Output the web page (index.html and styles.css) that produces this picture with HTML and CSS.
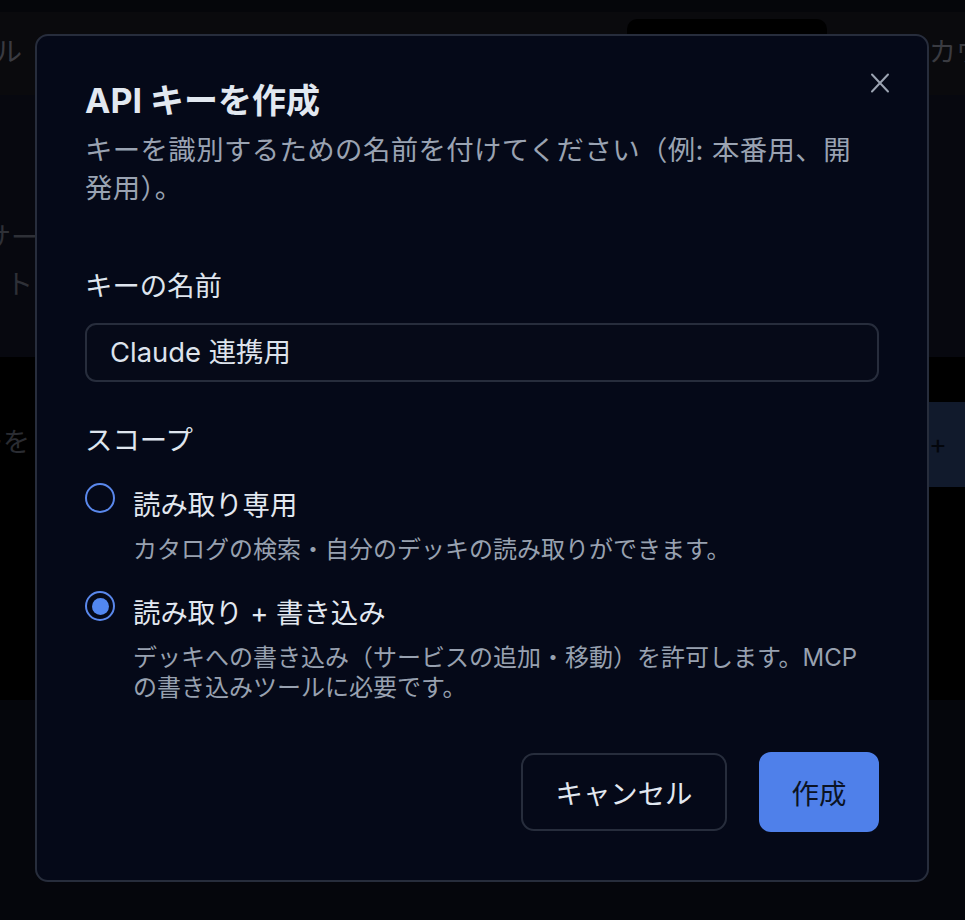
FILE: index.html
```html
<!DOCTYPE html>
<html lang="ja">
<head>
<meta charset="utf-8">
<title>APIキーを作成</title>
<link rel="stylesheet" href="styles.css">
</head>
<body>
<div class="page">
  <div class="strip"></div>
  <header class="hdr">
    <span class="hdr-l">ツール</span>
    <div class="tab"></div>
    <span class="hdr-r">アカウント</span>
  </header>
  <section class="sec2">
    <div class="bg-line1">サーバー</div>
    <div class="bg-line2">トークン</div>
  </section>
  <section class="sec3">
    <div class="bg-text">キーを</div>
    <div class="bg-btn">+</div>
  </section>
  <section class="sec4"></section>

  <div class="dialog" role="dialog" aria-labelledby="dlg-title">
    <button class="close" aria-label="閉じる">
      <svg width="24" height="24" viewBox="0 0 24 24" fill="none" stroke="currentColor" stroke-width="2" stroke-linecap="round"><path d="M4 3.5 L20 20.5 M20 3.5 L4 20.5"/></svg>
    </button>
    <h2 class="title" id="dlg-title">API キーを作成</h2>
    <p class="desc">キーを識別するための名前を付けてください（例: 本番用、開発用）。</p>

    <label class="field-label" for="keyname">キーの名前</label>
    <div class="input" id="keyname">Claude 連携用</div>

    <div class="field-label scope">スコープ</div>
    <div class="options">
      <div class="option">
        <span class="radio"></span>
        <div class="opt-body">
          <div class="opt-label">読み取り専用</div>
          <div class="opt-desc">カタログの検索・自分のデッキの読み取りができます。</div>
        </div>
      </div>
      <div class="option">
        <span class="radio checked"></span>
        <div class="opt-body">
          <div class="opt-label">読み取り + 書き込み</div>
          <div class="opt-desc">デッキへの書き込み（サービスの追加・移動）を許可します。MCP の書き込みツールに必要です。</div>
        </div>
      </div>
    </div>

    <div class="actions">
      <button class="btn btn-cancel">キャンセル</button>
      <button class="btn btn-primary">作成</button>
    </div>
  </div>
</div>
</body>
</html>
```
FILE: styles.css
```css
html, body {
  margin: 0;
  padding: 0;
}
body {
  background: #05060b;
  font-family: Inter, "Noto Sans CJK JP", sans-serif;
  overflow: hidden;
}
.page {
  position: relative;
  width: 965px;
  height: 920px;
  overflow: hidden;
  display: flex;
  flex-direction: column;
}
.strip {
  height: 12px;
  background: #05060a;
  flex-shrink: 0;
}
.hdr {
  height: 83px;
  flex-shrink: 0;
  background: #0a0a0d;
  display: flex;
  align-items: flex-start;
  color: #3a3b41;
  font-size: 27px;
  line-height: 28px;
  white-space: nowrap;
}
.hdr-l {
  margin-left: -59px;
  margin-top: 27px;
}
.tab {
  width: 200px;
  height: 30px;
  margin-left: 605px;
  margin-top: 7px;
  background: #000;
  border-radius: 10px 10px 0 0;
  flex-shrink: 0;
}
.hdr-r {
  margin-left: 75px;
  margin-top: 27px;
}
.sec2 {
  height: 262px;
  flex-shrink: 0;
  background: #07080f;
  color: #2e3037;
  font-size: 27px;
  line-height: 38px;
  white-space: nowrap;
}
.bg-line1 {
  margin-top: 124px;
  margin-left: -16px;
}
.bg-line2 {
  margin-top: 9px;
  margin-left: 6px;
}
.sec3 {
  height: 343px;
  flex-shrink: 0;
  background: #000;
  display: flex;
  align-items: flex-start;
  white-space: nowrap;
  font-size: 27px;
}
.bg-text {
  margin-left: -51px;
  margin-top: 67px;
  line-height: 38px;
  color: #2a2c32;
}
.bg-btn {
  margin-left: auto;
  width: 38px;
  flex-shrink: 0;
  margin-top: 45px;
  height: 85px;
  line-height: 85px;
  padding-left: 2px;
  box-sizing: border-box;
  background: #111a2c;
  color: #03060c;
}
.sec4 {
  flex: 1;
  background: #05060c;
}

/* dialog */
.dialog {
  position: absolute;
  left: 35px;
  top: 34px;
  width: 894px;
  box-sizing: border-box;
  padding: 43px 48px 48px;
  background: #050918;
  border: 2px solid #272d3c;
  border-radius: 13px;
  color: #e2e8f0;
}
.close {
  position: absolute;
  top: 35px;
  right: 35px;
  width: 24px;
  height: 24px;
  padding: 0;
  border: 0;
  background: none;
  color: #9ba3b1;
  display: flex;
}
.title {
  margin: 0;
  font-size: 34px;
  line-height: 44px;
  font-weight: 700;
  color: #e2e8f0;
}
.desc {
  margin: 8px 0 0;
  max-width: 785px;
  font-size: 27.4px;
  letter-spacing: 0.4px;
  line-height: 38px;
  color: #9aa3b2;
}
.field-label {
  display: block;
  margin-top: 60px;
  font-size: 27.4px;
  line-height: 38px;
  color: #dfe5ee;
}
.field-label.scope {
  margin-top: 39px;
}
.input {
  margin-top: 18px;
  height: 59px;
  box-sizing: border-box;
  border: 2px solid #272d3c;
  border-radius: 11px;
  background: #060a18;
  padding: 0 23px;
  font-size: 27.4px;
  line-height: 55px;
  color: #dde3ec;
}
.options {
  margin-top: 24px;
  display: flex;
  flex-direction: column;
  gap: 26px;
}
.option {
  display: flex;
  align-items: flex-start;
  gap: 18px;
}
.radio {
  width: 30px;
  height: 30px;
  box-sizing: border-box;
  border: 2px solid #5a88ec;
  border-radius: 50%;
  flex-shrink: 0;
  display: flex;
  align-items: center;
  justify-content: center;
}
.radio.checked::after {
  content: "";
  width: 17px;
  height: 17px;
  border-radius: 50%;
  background: #5287f0;
}
.opt-label {
  font-size: 27.4px;
  line-height: 44px;
  font-weight: 400;
  color: #e2e8f0;
}
.opt-desc {
  margin-top: 8px;
  max-width: 735px;
  font-size: 24px;
  line-height: 30px;
  color: #98a1b0;
}
.actions {
  margin-top: 49px;
  display: flex;
  justify-content: flex-end;
  align-items: center;
  gap: 32px;
}
.btn {
  font-family: inherit;
  font-size: 27.4px;
  cursor: pointer;
  box-sizing: border-box;
}
.btn-cancel {
  width: 206px;
  height: 78px;
  border: 2px solid #272d3c;
  border-radius: 13px;
  background: transparent;
  color: #e2e8f0;
}
.btn-primary {
  width: 120px;
  height: 80px;
  border: 0;
  border-radius: 12px;
  background: #4f80ea;
  color: #0b1324;
  font-weight: 400;
}
```
